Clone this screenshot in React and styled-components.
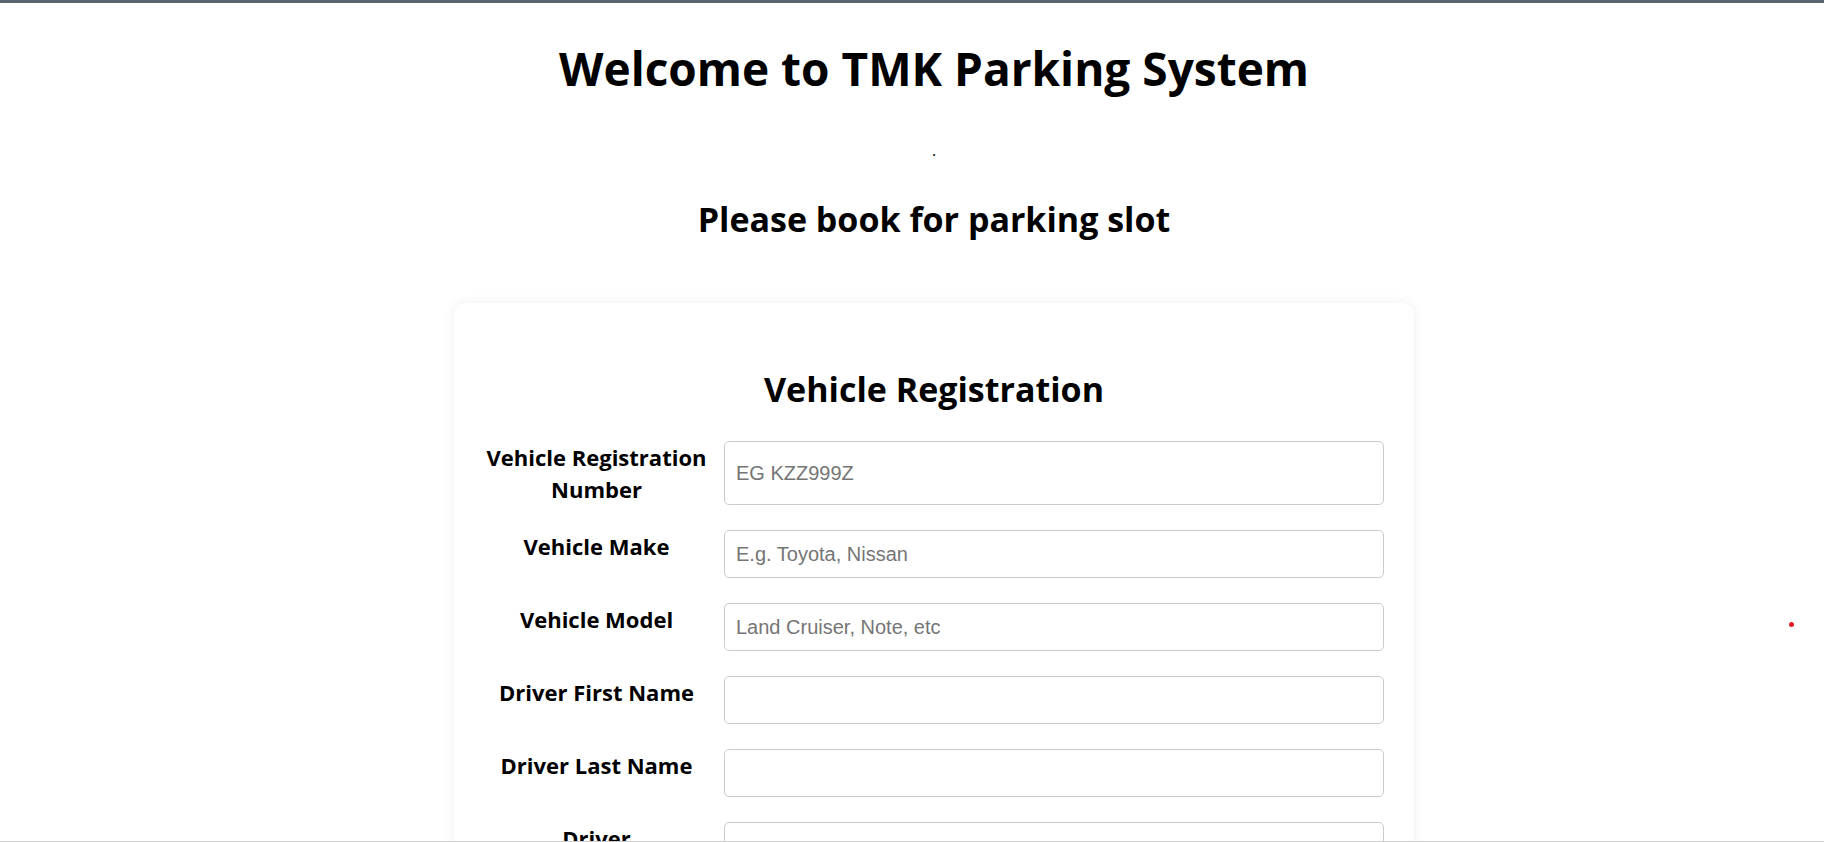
import React from 'react';
import styled, { createGlobalStyle } from 'styled-components';

// --- Global Styles ---
const GlobalStyle = createGlobalStyle`
  html, body {
    margin: 0;
    padding: 0;
    background: #ffffff;
    color: #000;
    font-family: 'Open Sans', 'Noto Sans', sans-serif;
    overflow: hidden;
  }
  * { box-sizing: border-box; }
`;

// --- Layout ---
const Page = styled.div`
  width: 100vw;
  min-height: 100vh;
  border-top: 3px solid #56656f;
  padding-left: 44px;
  display: flex;
  flex-direction: column;
  align-items: center;
  position: relative;
`;

const Title = styled.h1`
  margin: 33px 0 0;
  font-size: 46px;
  line-height: 64px;
  font-weight: 700;
  text-align: center;
`;

const Dot = styled.p`
  margin: 38px 0 0;
  font-size: 16px;
  line-height: 24px;
`;

const Subtitle = styled.h2`
  margin: 33px 0 0;
  font-size: 34px;
  line-height: 48px;
  font-weight: 700;
  text-align: center;
`;

const Card = styled.form`
  margin-top: 60px;
  width: 960px;
  padding: 30px 30px 40px;
  background: #fff;
  border-radius: 12px;
  box-shadow: 0 0 12px rgba(0, 0, 0, 0.07);
`;

const CardTitle = styled.h2`
  margin: 32px 0 28px;
  font-size: 34px;
  line-height: 48px;
  font-weight: 700;
  text-align: center;
`;

const Row = styled.div`
  display: flex;
  align-items: stretch;
  gap: 15px;
  margin-bottom: 25px;
`;

const Label = styled.label`
  flex: 0 0 225px;
  padding: 1px 2px 0;
  font-size: 22px;
  line-height: 31.5px;
  font-weight: 700;
  text-align: center;
`;

const Input = styled.input`
  flex: 1;
  min-height: 48px;
  padding: 0 11px;
  border: 1px solid #cbcbcb;
  border-radius: 5px;
  font-family: 'Liberation Sans', Arial, sans-serif;
  font-size: 20px;
  color: #222;
  background: #fff;
  outline: none;
  &::placeholder { color: #757575; }
`;

const Submit = styled.button`
  display: block;
  margin: 20px auto 0;
  padding: 12px 40px;
  border: none;
  border-radius: 6px;
  background: #1f6feb;
  color: #fff;
  font-family: inherit;
  font-size: 20px;
  font-weight: 700;
`;

// Stray red marker drawn by the page (sits over the blank area)
const RedDot = styled.span`
  position: absolute;
  left: 1789px;
  top: 619px;
  width: 5px;
  height: 5px;
  border-radius: 50%;
  background: #e21f1f;
`;

const BottomEdge = styled.div`
  position: fixed;
  left: 0;
  right: 0;
  bottom: 0;
  height: 1px;
  background: #cdcdcd;
`;

const fields = [
  { label: 'Vehicle Registration Number', placeholder: 'EG KZZ999Z' },
  { label: 'Vehicle Make', placeholder: 'E.g. Toyota, Nissan' },
  { label: 'Vehicle Model', placeholder: 'Land Cruiser, Note, etc' },
  { label: 'Driver First Name', placeholder: '' },
  { label: 'Driver Last Name', placeholder: '' },
  { label: 'Driver Identification Number', placeholder: '' },
  { label: 'Driver Phone Number', placeholder: '' },
];

export default function App() {
  return (
    <Page>
      <GlobalStyle />
      <Title>Welcome to TMK Parking System</Title>
      <Dot>.</Dot>
      <Subtitle>Please book for parking slot</Subtitle>

      <Card onSubmit={(e) => e.preventDefault()}>
        <CardTitle>Vehicle Registration</CardTitle>
        {fields.map((f) => (
          <Row key={f.label}>
            <Label>{f.label}</Label>
            <Input type="text" placeholder={f.placeholder} />
          </Row>
        ))}
        <Submit type="submit">Book Slot</Submit>
      </Card>

      <RedDot />
      <BottomEdge />
    </Page>
  );
}
